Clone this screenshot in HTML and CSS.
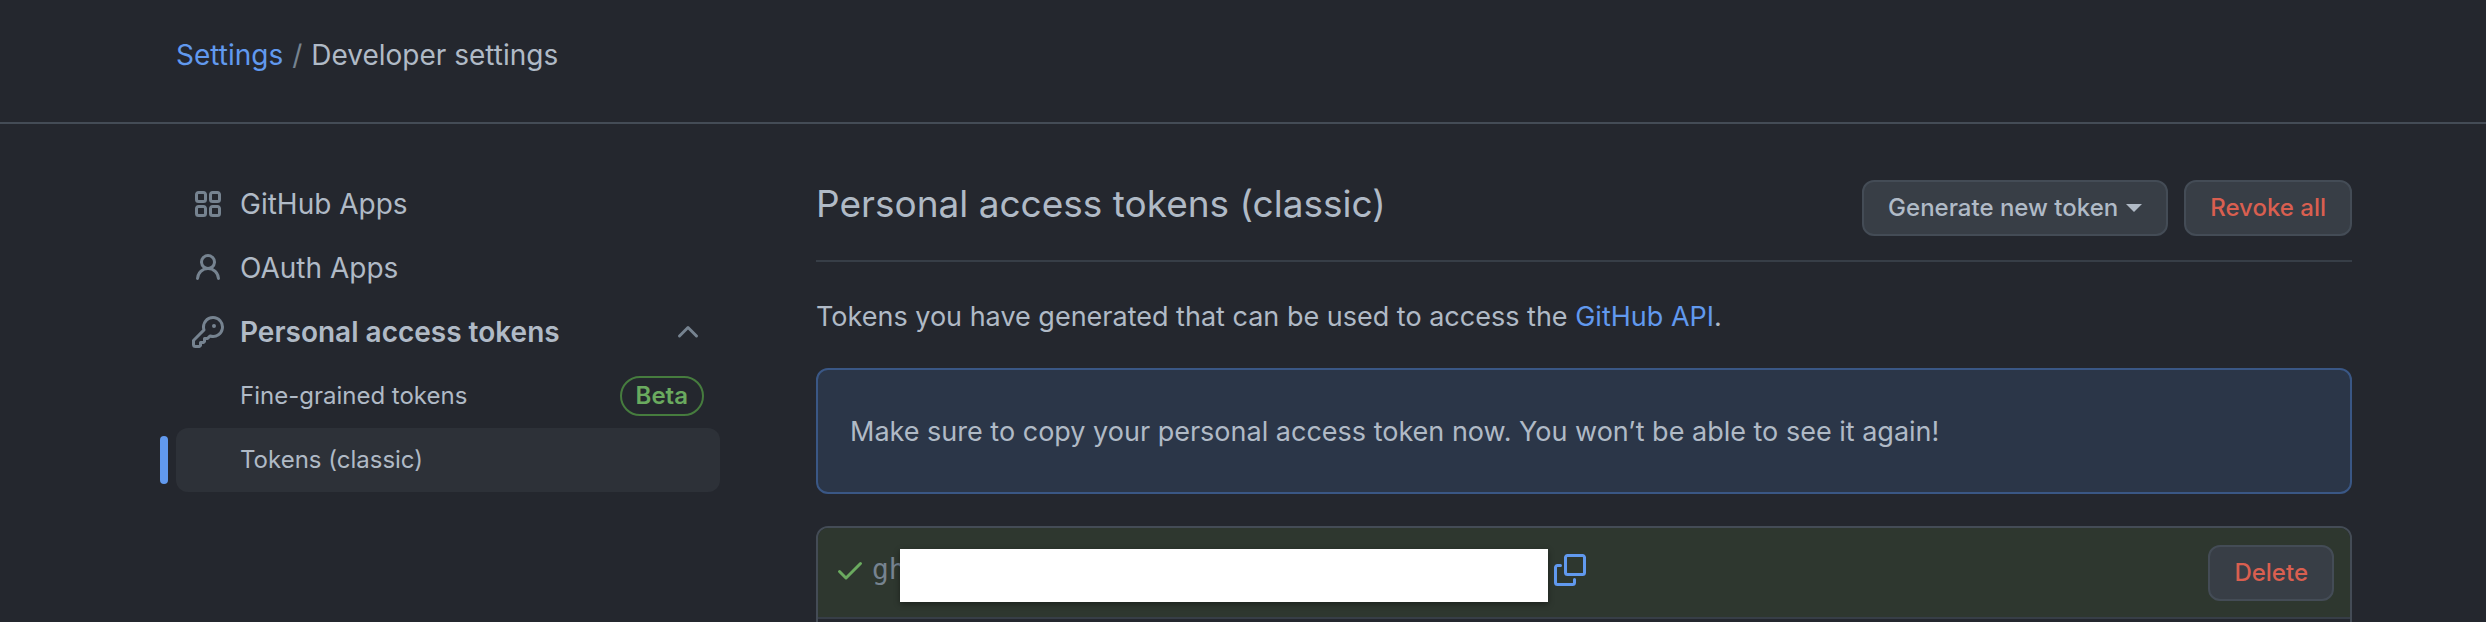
FILE: index.html
```html
<!DOCTYPE html>
<html lang="en">
<head>
<meta charset="utf-8">
<title>Personal access tokens (classic)</title>
<link rel="stylesheet" href="styles.css">
</head>
<body>
<header class="page-header">
  <nav class="breadcrumb" aria-label="Breadcrumb">
    <a class="link" href="#">Settings</a>
    <span class="divider">/</span>
    <span>Developer settings</span>
  </nav>
</header>
<div class="layout">
  <nav class="sidebar" aria-label="Developer settings">
    <a class="nav-item" href="#">
      <svg class="icon" viewBox="0 0 16 16" aria-hidden="true"><path fill-rule="evenodd" d="M1.5 3.25c0-.966.784-1.75 1.75-1.75h2.5c.966 0 1.75.784 1.75 1.75v2.5A1.75 1.75 0 0 1 5.75 7.5h-2.5A1.75 1.75 0 0 1 1.5 5.75Zm7 0c0-.966.784-1.75 1.75-1.75h2.5c.966 0 1.75.784 1.75 1.75v2.5a1.75 1.75 0 0 1-1.75 1.75h-2.5A1.75 1.75 0 0 1 8.5 5.75Zm-7 7c0-.966.784-1.75 1.75-1.75h2.5c.966 0 1.75.784 1.75 1.75v2.5a1.75 1.75 0 0 1-1.75 1.75h-2.5a1.75 1.75 0 0 1-1.75-1.75Zm7 0c0-.966.784-1.75 1.75-1.75h2.5c.966 0 1.75.784 1.75 1.75v2.5a1.75 1.75 0 0 1-1.75 1.75h-2.5a1.75 1.75 0 0 1-1.75-1.75ZM3.25 3a.25.25 0 0 0-.25.25v2.5c0 .138.112.25.25.25h2.5A.25.25 0 0 0 6 5.75v-2.5A.25.25 0 0 0 5.75 3Zm7 0a.25.25 0 0 0-.25.25v2.5c0 .138.112.25.25.25h2.5a.25.25 0 0 0 .25-.25v-2.5a.25.25 0 0 0-.25-.25Zm-7 7a.25.25 0 0 0-.25.25v2.5c0 .138.112.25.25.25h2.5a.25.25 0 0 0 .25-.25v-2.5a.25.25 0 0 0-.25-.25Zm7 0a.25.25 0 0 0-.25.25v2.5c0 .138.112.25.25.25h2.5a.25.25 0 0 0 .25-.25v-2.5a.25.25 0 0 0-.25-.25Z"/></svg>
      <span>GitHub Apps</span>
    </a>
    <a class="nav-item" href="#">
      <svg class="icon" viewBox="0 0 16 16" aria-hidden="true"><path d="M10.561 8.073a6 6 0 0 1 3.432 5.142.75.75 0 1 1-1.498.07 4.5 4.5 0 0 0-8.99 0 .75.75 0 0 1-1.498-.07 6.004 6.004 0 0 1 3.431-5.142 3.999 3.999 0 1 1 5.123 0ZM10.5 5a2.5 2.5 0 1 0-5 0 2.5 2.5 0 0 0 5 0Z"/></svg>
      <span>OAuth Apps</span>
    </a>
    <button class="nav-item nav-group" type="button" aria-expanded="true">
      <svg class="icon" viewBox="0 0 16 16" aria-hidden="true"><path d="M10.5 0a5.499 5.499 0 1 1-1.288 10.848l-.932.932a.749.749 0 0 1-.53.22H7v.75a.749.749 0 0 1-.22.53l-.5.5a.749.749 0 0 1-.53.22H5v.75a.749.749 0 0 1-.22.53l-.5.5a.749.749 0 0 1-.53.22h-2A1.75 1.75 0 0 1 0 14.25v-2c0-.199.079-.389.22-.53l4.932-4.932A5.5 5.5 0 0 1 10.5 0Zm-4 5.5c-.001.431.069.86.205 1.269a.75.75 0 0 1-.181.768L1.5 12.56v1.69c0 .138.112.25.25.25h1.69l.06-.06v-1.19a.75.75 0 0 1 .75-.75h1.19l.06-.06v-1.19a.75.75 0 0 1 .75-.75h1.19l1.023-1.025a.75.75 0 0 1 .768-.18A4 4 0 1 0 6.5 5.5ZM11 6a1 1 0 1 1 0-2 1 1 0 0 1 0 2Z"/></svg>
      <span class="grow">Personal access tokens</span>
      <svg class="icon" viewBox="0 0 16 16" aria-hidden="true"><path d="M3.22 10.53a.749.749 0 0 1 0-1.06l4.25-4.25a.749.749 0 0 1 1.06 0l4.25 4.25a.749.749 0 1 1-1.06 1.06L8 6.811 4.28 10.53a.749.749 0 0 1-1.06 0Z"/></svg>
    </button>
    <a class="nav-item nav-sub" href="#">
      <span class="grow">Fine-grained tokens</span>
      <span class="badge">Beta</span>
    </a>
    <a class="nav-item nav-sub current" href="#" aria-current="page">
      <span>Tokens (classic)</span>
    </a>
  </nav>
  <main class="main">
    <div class="subhead">
      <h1 class="title">Personal access tokens (classic)</h1>
      <div class="actions">
        <button class="btn" type="button">Generate new token<span class="caret"></span></button>
        <button class="btn btn-danger" type="button">Revoke all</button>
      </div>
    </div>
    <p class="intro">Tokens you have generated that can be used to access the <a class="link" href="#">GitHub API</a>.</p>
    <div class="flash" role="status">Make sure to copy your personal access token now. You won’t be able to see it again!</div>
    <ul class="token-list">
      <li class="token new">
        <div class="token-value">
          <svg class="icon check" viewBox="0 0 16 16" aria-hidden="true"><path d="M13.78 4.22a.75.75 0 0 1 0 1.06l-7.25 7.25a.75.75 0 0 1-1.06 0L2.22 9.28a.751.751 0 0 1 .018-1.042.751.751 0 0 1 1.042-.018L6 10.94l6.72-6.72a.75.75 0 0 1 1.06 0Z"/></svg>
          <div class="secret"><code class="code">gh</code><span class="mask"></span></div>
          <button class="copy" type="button" aria-label="Copy token">
            <svg class="icon" viewBox="0 0 16 16" aria-hidden="true"><path d="M0 6.75C0 5.784.784 5 1.75 5h1.5a.75.75 0 0 1 0 1.5h-1.5a.25.25 0 0 0-.25.25v7.5c0 .138.112.25.25.25h7.5a.25.25 0 0 0 .25-.25v-1.5a.75.75 0 0 1 1.5 0v1.5A1.75 1.75 0 0 1 9.25 16h-7.5A1.75 1.75 0 0 1 0 14.25Z"/><path d="M5 1.75C5 .784 5.784 0 6.75 0h7.5C15.216 0 16 .784 16 1.75v7.5A1.75 1.75 0 0 1 14.25 11h-7.5A1.75 1.75 0 0 1 5 9.25Zm1.75-.25a.25.25 0 0 0-.25.25v7.5c0 .138.112.25.25.25h7.5a.25.25 0 0 0 .25-.25v-7.5a.25.25 0 0 0-.25-.25Z"/></svg>
          </button>
        </div>
        <button class="btn btn-danger" type="button">Delete</button>
      </li>
    </ul>
  </main>
</div>
</body>
</html>
```
FILE: styles.css
```css
* { box-sizing: border-box; }
body {
  margin: 0;
  background: #24272e;
  color: #b0bac6;
  font: 27px/42px Inter, "Liberation Sans", sans-serif;
}
.link { color: #6199ee; text-decoration: none; }
.icon { width: 32px; height: 32px; flex: none; fill: #768390; }
.grow { flex: 1; }
.page-header {
  padding: 34px 134px 46px 176px;
  border-bottom: 2px solid #444c56;
}
.breadcrumb { display: flex; gap: 9px; font-size: 28px; }
.divider { color: #768390; }
.layout { display: flex; gap: 96px; padding: 48px 134px 0 176px; }
.sidebar { width: 544px; flex: none; font-size: 28px; }
.nav-item {
  position: relative;
  display: flex;
  align-items: center;
  gap: 16px;
  width: 100%;
  height: 64px;
  padding: 0 16px;
  border: 0;
  border-radius: 12px;
  background: none;
  color: inherit;
  font: inherit;
  text-align: left;
  text-decoration: none;
}
.nav-group { font-weight: 600; }
.nav-sub { padding-left: 64px; font-size: 24px; }
.current { background: #2d3138; }
.current::before {
  content: "";
  position: absolute;
  left: -16px;
  top: 8px;
  bottom: 8px;
  width: 8px;
  border-radius: 4px;
  background: #6199ee;
}
.badge {
  padding: 0 14px;
  border: 2px solid #467c3e;
  border-radius: 20px;
  color: #6aaa5f;
  font-weight: 600;
  line-height: 36px;
}
.main { flex: 1; min-width: 0; }
.subhead {
  display: flex;
  justify-content: space-between;
  padding: 8px 0 24px;
  border-bottom: 2px solid #373e47;
}
.title { margin: 0; font-size: 37px; font-weight: 400; line-height: 48px; }
.actions { display: flex; gap: 16px; }
.btn {
  display: flex;
  align-items: center;
  height: 56px;
  padding: 0 24px;
  border: 2px solid #444c56;
  border-radius: 12px;
  background: #383e46;
  color: #b0bac6;
  font: 500 24px/40px Inter, "Liberation Sans", sans-serif;
}
.btn-danger { color: #d95f50; }
.caret {
  margin-left: 8px;
  border: 8px solid transparent;
  border-top-color: currentColor;
  border-bottom: 0;
}
.intro { margin: 34px 0 30px; }
.flash {
  padding: 41px 32px 39px;
  border: 2px solid #3a5785;
  border-radius: 12px;
  background: #2b3648;
}
.token-list {
  margin: 32px 0 0;
  padding: 0 0 32px;
  border: 2px solid #444c56;
  border-radius: 12px;
  list-style: none;
  overflow: hidden;
}
.new {
  display: flex;
  align-items: center;
  justify-content: space-between;
  padding: 17px 16px 16px;
  border-bottom: 2px solid #373e47;
  background: #2e372f;
}
.token-value { display: flex; align-items: center; padding-bottom: 6px; }
.check { fill: #6aaa5f; }
.secret { position: relative; width: 676px; margin: 0 6px; }
.code { color: #768390; font: 28px/42px "DejaVu Sans Mono", monospace; }
.mask {
  position: absolute;
  top: 0;
  right: 0;
  width: 648px;
  height: 53px;
  background: #fff;
  box-shadow: 0 2px 6px rgba(0, 0, 0, .4);
}
.copy { display: flex; padding: 0; border: 0; background: none; }
.copy .icon { fill: #6199ee; }
```
